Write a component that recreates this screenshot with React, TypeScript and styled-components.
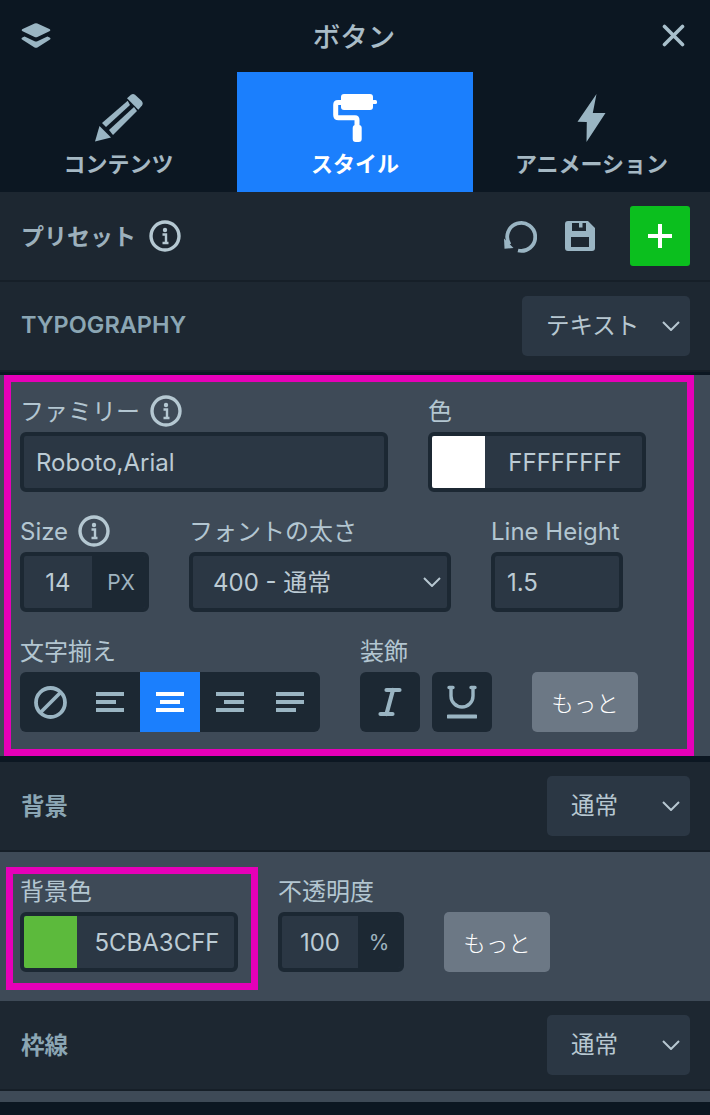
import React from 'react';
import styled, { createGlobalStyle } from 'styled-components';

const ink = '#0c1722';
const rowBg = '#1d2731';
const panelBg = '#3e4a57';
const fieldBg = '#2b3744';
const fieldEdge = '#1c2833';
const iconColor = '#9ab5c3';
const pink = '#e600b8';
const blue = '#1b7ffd';

const Global = createGlobalStyle`
  html, body {
    margin: 0;
    padding: 0;
    background: ${ink};
  }
  * {
    box-sizing: border-box;
  }
  body {
    font-family: Inter, "Noto Sans CJK JP", sans-serif;
  }
`;

const Page = styled.div`
  width: 710px;
  height: 1115px;
  overflow: hidden;
  background: ${ink};
`;

const Header = styled.header`
  height: 72px;
  padding: 0 25px 2px 21px;
  display: grid;
  grid-template-columns: 1fr auto 1fr;
  align-items: center;
`;

const CloseSlot = styled.span`
  display: flex;
  justify-self: end;
`;

const Title = styled.h1`
  margin: 0 0 0 2px;
  font-size: 27.5px;
  font-weight: 500;
  color: #a9bcc7;
`;

const Tabs = styled.nav`
  height: 120px;
  display: grid;
  grid-template-columns: 237px 236px 237px;
`;

const Tab = styled.div<{ $active?: boolean }>`
  display: flex;
  flex-direction: column;
  align-items: center;
  padding-top: 22px;
  gap: 7px;
  background: ${({ $active }) => ($active ? blue : 'transparent')};
  color: ${({ $active }) => ($active ? '#fff' : '#a5b8c3')};
  font-size: 22px;
  font-weight: 600;
  line-height: 30px;
`;

const Row = styled.div`
  height: 90px;
  padding: 0 20px 0 21px;
  display: flex;
  align-items: center;
  background: ${rowBg};
  border-bottom: 2px solid #161f28;
`;

const RowTitle = styled.div`
  padding-bottom: 3px;
  font-size: 23.5px;
  font-weight: 600;
  color: #8ba6b4;
`;

const PresetTitle = styled.div`
  display: flex;
  align-items: center;
  gap: 13px;
`;

const PresetText = styled(RowTitle)`
  font-size: 23px;
  color: #9cb0bc;
`;

const RowActions = styled.div`
  margin-left: auto;
  display: flex;
  align-items: center;
`;

const AddButton = styled.button`
  width: 60px;
  height: 60px;
  margin-left: 35px;
  padding: 0;
  border: 0;
  border-radius: 3px;
  background: #0bbf1e;
  display: flex;
  align-items: center;
  justify-content: center;
`;

const SaveSlot = styled.span`
  display: flex;
  margin-left: 28px;
`;

const Dropdown = styled.div<{ $width: number }>`
  width: ${({ $width }) => $width}px;
  height: 60px;
  margin-left: auto;
  padding: 0 10px 0 24px;
  border-radius: 5px;
  background: ${fieldBg};
  display: flex;
  align-items: center;
  justify-content: space-between;
  font-size: 23.5px;
  color: #b7c7d1;
`;

const DropdownText = styled.span`
  padding-bottom: 4px;
`;

const Panel = styled.section<{ $row?: boolean }>`
  background: ${panelBg};
  ${({ $row }) => $row && 'display: flex; align-items: flex-start; padding: 15px 0 11px 6px;'}
`;

const TypographyBox = styled.div`
  margin: 3px 16px 6px 4px;
  padding: 14px 9px 17px;
  border: 7px solid ${pink};
  display: flex;
  flex-direction: column;
  gap: 24px;
`;

const SwatchBox = styled.div`
  padding: 2px 13px 11px 7px;
  border: 7px solid ${pink};
`;

const ControlRow = styled.div`
  display: flex;
  gap: 40px;
`;

const Column = styled.div<{ $width: number; $gap?: number; $top?: number }>`
  width: ${({ $width }) => $width}px;
  flex: none;
  margin-left: ${({ $gap }) => $gap ?? 0}px;
  margin-top: ${({ $top }) => $top ?? 0}px;
`;

const Label = styled.label`
  height: 30px;
  margin-bottom: 6px;
  display: flex;
  align-items: center;
  gap: 10px;
  font-size: 24px;
  font-weight: 400;
  color: #b3c6d1;
  white-space: nowrap;
`;

const LabelText = styled.span`
  padding-bottom: 3px;
`;

const Field = styled.div`
  height: 60px;
  border: 4px solid ${fieldEdge};
  border-radius: 6px;
  background: ${fieldBg};
  display: flex;
  align-items: center;
  overflow: hidden;
  font-size: 24px;
  color: #bccbd4;
`;

const TextValue = styled.span`
  padding-left: 12px;
`;

const SelectField = styled(Field)`
  justify-content: space-between;
  padding: 0 6px 0 20px;
`;

const SelectText = styled.span`
  padding-bottom: 4px;
`;

const Swatch = styled.span<{ $color: string }>`
  width: 53px;
  align-self: stretch;
  flex: none;
  background: ${({ $color }) => $color};
`;

const SwatchValue = styled.span`
  flex: 1;
  text-align: center;
  padding-left: 10px;
  padding-right: 7px;
  white-space: nowrap;
`;

const NumberValue = styled.span`
  flex: 1;
  text-align: center;
`;

const Unit = styled.span<{ $width: number; $inset: number }>`
  width: ${({ $width }) => $width}px;
  align-self: stretch;
  flex: none;
  padding-left: ${({ $inset }) => $inset}px;
  background: ${fieldEdge};
  display: flex;
  align-items: center;
  justify-content: center;
  font-size: 21px;
  color: #9fb3bf;
`;

const ButtonGroup = styled.div`
  width: 300px;
  height: 60px;
  border-radius: 6px;
  background: ${fieldEdge};
  display: flex;
  overflow: hidden;
`;

const GroupButton = styled.span<{ $active?: boolean }>`
  width: 60px;
  display: flex;
  align-items: center;
  justify-content: center;
  background: ${({ $active }) => ($active ? blue : 'transparent')};
  color: ${({ $active }) => ($active ? '#fff' : iconColor)};
`;

const AlignLines = styled.span<{ $align: string }>`
  width: 28px;
  display: flex;
  flex-direction: column;
  gap: 4px;
  align-items: ${({ $align }) => $align};
`;

const AlignBar = styled.i<{ $short?: boolean }>`
  display: block;
  height: 4px;
  width: ${({ $short }) => ($short ? 20 : 28)}px;
  background: currentColor;
`;

const DecorationRow = styled.div`
  display: flex;
  gap: 12px;
`;

const DecorationButton = styled.span`
  width: 60px;
  height: 60px;
  border-radius: 6px;
  background: ${fieldEdge};
  display: flex;
  align-items: center;
  justify-content: center;
`;

const MoreButton = styled.button`
  width: 106px;
  height: 60px;
  padding: 0;
  border: 0;
  border-radius: 5px;
  background: #6c7885;
  color: #fff;
  font: 300 22.5px Inter, "Noto Sans CJK JP", sans-serif;
`;

const BottomStrip = styled.div`
  height: 11px;
  background: ${panelBg};
`;

const InfoIcon = () => (
  <svg width="32" height="32" viewBox="0 0 32 32" fill="none">
    <circle cx="16" cy="16" r="14" stroke="#b5c8d2" strokeWidth="3.4" />
    <circle cx="16" cy="10" r="2.2" fill="#b5c8d2" />
    <path d="M13.5 14.5h3.500v8M13.500 23h6" stroke="#b5c8d2" strokeWidth="2.400" />
  </svg>
);

const Chevron = () => (
  <svg width="18" height="10" viewBox="0 0 18 10" fill="none">
    <path d="M1 1l8 8 8-8" stroke="#b7c7d1" strokeWidth="2" />
  </svg>
);

const LayersIcon = () => (
  <svg width="30" height="25" viewBox="0 0 30 25" fill={iconColor}>
    <path d="M13.600.5a3 3 0 0 1 2.800 0l12 5.600c1.200.6 1.200 1.600 0 2.200l-12 5.600a3 3 0 0 1-2.800 0l-12-5.600c-1.200-.6-1.200-1.600 0-2.200z" />
    <path d="M3.600 13.600l10 4.600a3 3 0 0 0 2.800 0l10-4.600 2.200 1c1.200.6 1.200 1.600 0 2.200l-12.200 7.600a3 3 0 0 1-2.800 0L1.400 16.800c-1.200-.6-1.200-1.600 0-2.200z" />
  </svg>
);

const CloseIcon = () => (
  <svg width="23" height="23" viewBox="0 0 23 23" fill="none">
    <path d="M2.500 2.500l18 18M20.500 2.500l-18 18" stroke="#a9c0cc" strokeWidth="3.600" strokeLinecap="round" />
  </svg>
);

const PencilIcon = () => (
  <svg width="48" height="48" viewBox="0 0 48 48" fill={iconColor}>
    <path d="M0 47.500L4.500 32 16 43.500z" />
    <path d="M7 29L32.700 6.700 35 11 11 33z" />
    <path d="M14 36L39 13l3 4-24 24z" />
    <path d="M32 4.300L36 .8Q38-.6 40 .8l6.500 6Q48.500 9 47 11.500l-3.700 4.200z" />
  </svg>
);

const RollerIcon = () => (
  <svg width="44" height="48" viewBox="0 0 44 48" fill="#fff">
    <rect x="8" y="0" width="32" height="16" rx="3" />
    <rect x="39" y="6" width="5" height="4" rx="1.500" />
    <path d="M9 8.500H5Q2.700 8.500 2.700 11V21Q2.700 23.800 5.500 23.800H22Q24 23.800 24 26V32" fill="none" stroke="#fff" strokeWidth="5" />
    <rect x="19.700" y="31" width="9" height="17" rx="3" />
  </svg>
);

const BoltIcon = () => (
  <svg width="30" height="48" viewBox="0 0 30 48" fill={iconColor}>
    <path d="M19.500 0L.5 27.700l9.300.3-.3 20L28.500 19l-12.700 0z" />
  </svg>
);

const UndoIcon = () => (
  <svg width="34" height="34" viewBox="0 0 34 34" fill="none">
    <path d="M6.500 25.500A14 14 0 1 1 15 31.500" stroke={iconColor} strokeWidth="3.800" />
    <path d="M1 19.500l9.500 9.500-9 .8z" fill={iconColor} />
  </svg>
);

const SaveIcon = () => (
  <svg width="30" height="30" viewBox="0 0 30 30" fill={iconColor}>
    <path
      fillRule="evenodd"
      d="M3 0H23L30 7V27a3 3 0 0 1-3 3H3a3 3 0 0 1-3-3V3a3 3 0 0 1 3-3zM7 2V10H21V2H17.500V6.500H14V2zM6 16V26H24V16z"
    />
  </svg>
);

const PlusIcon = () => (
  <svg width="24" height="24" viewBox="0 0 24 24" fill="#fff">
    <rect x="10" y="0" width="4" height="24" />
    <rect x="0" y="10" width="24" height="4" />
  </svg>
);

const BanIcon = () => (
  <svg width="33" height="33" viewBox="0 0 33 33" fill="none" stroke={iconColor} strokeWidth="3.800">
    <circle cx="16.500" cy="16.500" r="14.500" />
    <path d="M6.500 26.500l20-20" />
  </svg>
);

const ItalicIcon = () => (
  <svg width="24" height="30" viewBox="0 0 24 30" fill="none" stroke={iconColor} strokeWidth="4.200" strokeLinecap="round">
    <path d="M8.500 3h13M2.500 27h12M15 3L8.500 27" />
  </svg>
);

const UnderlineIcon = () => (
  <svg width="30" height="34" viewBox="0 0 30 34" fill="none" stroke={iconColor} strokeLinecap="round">
    <path d="M4 3v8a11 11 0 0 0 22 0V3" strokeWidth="3.400" />
    <path d="M2 2.500h4M24 2.500h4" strokeWidth="3.400" />
    <path d="M1.500 31.500h27" strokeWidth="4.200" />
  </svg>
);

const ALIGNMENTS = [
  { id: 'left', align: 'flex-start', short: [1] },
  { id: 'center', align: 'center', short: [1], active: true },
  { id: 'right', align: 'flex-end', short: [1] },
  { id: 'justify', align: 'flex-start', short: [2] },
];

const App = () => (
  <Page>
    <Global />
    <Header>
      <LayersIcon />
      <Title>ボタン</Title>
      <CloseSlot>
        <CloseIcon />
      </CloseSlot>
    </Header>
    <Tabs>
      <Tab>
        <PencilIcon />
        コンテンツ
      </Tab>
      <Tab $active>
        <RollerIcon />
        スタイル
      </Tab>
      <Tab>
        <BoltIcon />
        アニメーション
      </Tab>
    </Tabs>

    <Row>
      <PresetTitle>
        <PresetText>プリセット</PresetText>
        <InfoIcon />
      </PresetTitle>
      <RowActions>
        <UndoIcon />
        <SaveSlot>
          <SaveIcon />
        </SaveSlot>
        <AddButton>
          <PlusIcon />
        </AddButton>
      </RowActions>
    </Row>

    <Row>
      <RowTitle>TYPOGRAPHY</RowTitle>
      <Dropdown $width={168}>
        <DropdownText>テキスト</DropdownText>
        <Chevron />
      </Dropdown>
    </Row>

    <Panel>
      <TypographyBox>
        <ControlRow>
          <Column $width={368}>
            <Label>
              <LabelText>ファミリー</LabelText>
              <InfoIcon />
            </Label>
            <Field>
              <TextValue>Roboto,Arial</TextValue>
            </Field>
          </Column>
          <Column $width={218}>
            <Label>
              <LabelText>色</LabelText>
            </Label>
            <Field>
              <Swatch $color="#ffffff" />
              <SwatchValue>FFFFFFFF</SwatchValue>
            </Field>
          </Column>
        </ControlRow>

        <ControlRow>
          <Column $width={129}>
            <Label>
              Size
              <InfoIcon />
            </Label>
            <Field>
              <NumberValue>14</NumberValue>
              <Unit $width={53} $inset={5}>PX</Unit>
            </Field>
          </Column>
          <Column $width={262}>
            <Label>
              <LabelText>フォントの太さ</LabelText>
            </Label>
            <SelectField>
              <SelectText>400 - 通常</SelectText>
              <Chevron />
            </SelectField>
          </Column>
          <Column $width={132}>
            <Label>Line Height</Label>
            <Field>
              <TextValue>1.5</TextValue>
            </Field>
          </Column>
        </ControlRow>

        <ControlRow>
          <Column $width={300}>
            <Label>
              <LabelText>文字揃え</LabelText>
            </Label>
            <ButtonGroup>
              <GroupButton>
                <BanIcon />
              </GroupButton>
              {ALIGNMENTS.map((item) => (
                <GroupButton key={item.id} $active={item.active}>
                  <AlignLines $align={item.align}>
                    {[0, 1, 2].map((line) => (
                      <AlignBar key={line} $short={item.short.includes(line)} />
                    ))}
                  </AlignLines>
                </GroupButton>
              ))}
            </ButtonGroup>
          </Column>
          <Column $width={132}>
            <Label>
              <LabelText>装飾</LabelText>
            </Label>
            <DecorationRow>
              <DecorationButton>
                <ItalicIcon />
              </DecorationButton>
              <DecorationButton>
                <UnderlineIcon />
              </DecorationButton>
            </DecorationRow>
          </Column>
          <Column $width={106} $top={36}>
            <MoreButton>もっと</MoreButton>
          </Column>
        </ControlRow>
      </TypographyBox>
    </Panel>

    <Row>
      <RowTitle>背景</RowTitle>
      <Dropdown $width={143}>
        <DropdownText>通常</DropdownText>
        <Chevron />
      </Dropdown>
    </Row>

    <Panel $row>
      <SwatchBox>
        <Column $width={218}>
          <Label>
            <LabelText>背景色</LabelText>
          </Label>
          <Field>
            <Swatch $color="#5cba3c" />
            <SwatchValue>5CBA3CFF</SwatchValue>
          </Field>
        </Column>
      </SwatchBox>
      <Column $width={126} $gap={20} $top={9}>
        <Label>
          <LabelText>不透明度</LabelText>
        </Label>
        <Field>
          <NumberValue>100</NumberValue>
          <Unit $width={42} $inset={0}>%</Unit>
        </Field>
      </Column>
      <Column $width={106} $gap={40} $top={45}>
        <MoreButton>もっと</MoreButton>
      </Column>
    </Panel>

    <Row>
      <RowTitle>枠線</RowTitle>
      <Dropdown $width={143}>
        <DropdownText>通常</DropdownText>
        <Chevron />
      </Dropdown>
    </Row>
    <BottomStrip />
  </Page>
);

export default App;
